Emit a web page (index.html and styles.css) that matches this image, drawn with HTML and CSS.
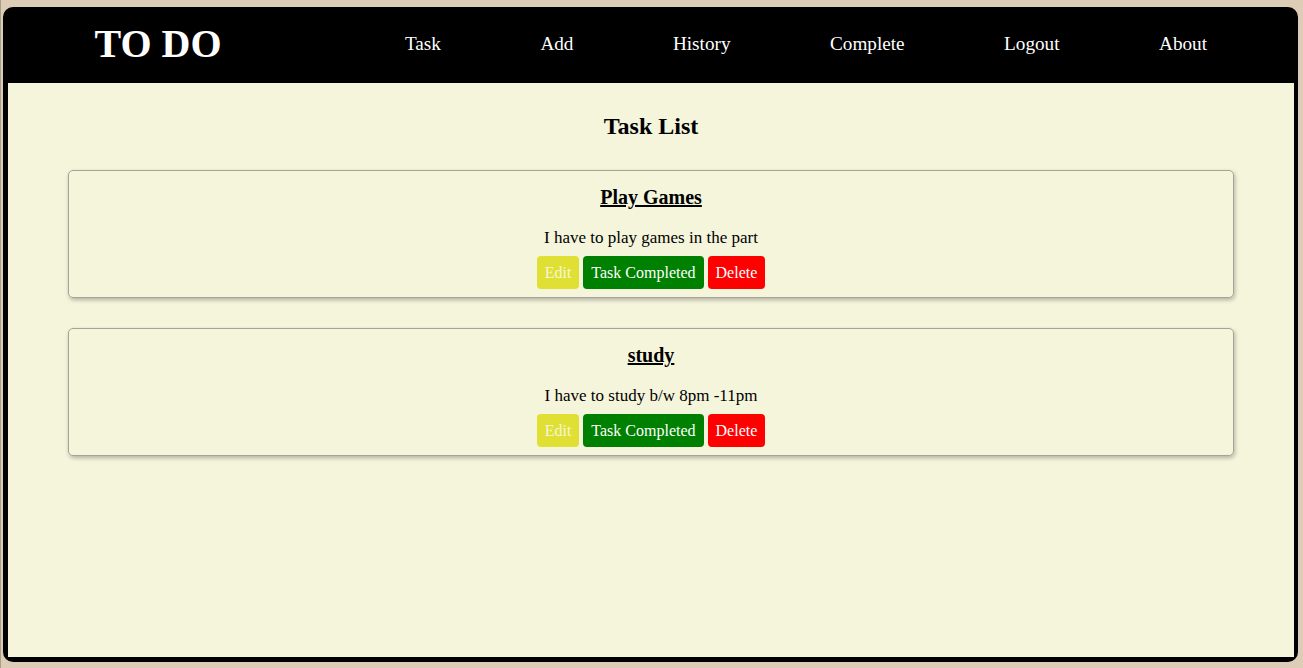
FILE: index.html
```html
<!DOCTYPE html>
<html lang="en">
<head>
<meta charset="utf-8">
<title>TO DO</title>
<link rel="stylesheet" href="styles.css">
</head>
<body>
<div class="frame">
  <header class="topbar">
    <div class="logo">TO DO</div>
    <nav class="nav">
      <a class="nav-link" href="#">Task</a>
      <a class="nav-link" href="#">Add</a>
      <a class="nav-link" href="#">History</a>
      <a class="nav-link" href="#">Complete</a>
      <a class="nav-link" href="#">Logout</a>
      <a class="nav-link" href="#">About</a>
    </nav>
  </header>
  <main class="content">
    <h2 class="page-title">Task List</h2>
    <div class="card">
      <h3 class="card-title">Play Games</h3>
      <p class="card-desc">I have to play games in the part</p>
      <div class="actions">
        <button class="btn btn-edit">Edit</button>
        <button class="btn btn-done">Task Completed</button>
        <button class="btn btn-delete">Delete</button>
      </div>
    </div>
    <div class="card">
      <h3 class="card-title">study</h3>
      <p class="card-desc">I have to study b/w 8pm -11pm</p>
      <div class="actions">
        <button class="btn btn-edit">Edit</button>
        <button class="btn btn-done">Task Completed</button>
        <button class="btn btn-delete">Delete</button>
      </div>
    </div>
  </main>
</div>
</body>
</html>
```

FILE: styles.css
```css
html, body {
  margin: 0;
  padding: 0;
  height: 100%;
}
body {
  background: #ddccb6;
  font-family: "Liberation Serif", "Times New Roman", serif;
  box-sizing: border-box;
  padding: 7px 5px 6px 3px;
  border-left: 1px solid #a89c8e;
}
.frame {
  box-sizing: border-box;
  height: 100%;
  margin-left: -1px;
  background: #000;
  border-radius: 10px;
  padding: 0 4px 5px 5px;
  display: flex;
  flex-direction: column;
}
.topbar {
  box-sizing: border-box;
  height: 76px;
  padding-bottom: 2px;
  display: flex;
  align-items: center;
  flex-shrink: 0;
}
.logo {
  width: 300px;
  text-align: center;
  color: #fff;
  font-weight: bold;
  font-size: 40px;
  line-height: 46px;
}
.nav {
  margin-left: auto;
  margin-right: 87px;
  display: flex;
  gap: 99.5px;
}
.nav-link {
  color: #fff;
  text-decoration: none;
  font-size: 19.2px;
}
.content {
  flex: 1;
  background: #f5f5dc;
  padding: 29px 60px 0;
}
.page-title {
  margin: 0 0 30px;
  text-align: center;
  font-size: 24px;
  line-height: 28px;
  font-weight: bold;
  color: #000;
}
.card {
  border: 1px solid #a5a39a;
  border-radius: 5px;
  box-shadow: 1px 2px 4px rgba(0, 0, 0, 0.28);
  padding: 15px 0 8px;
  margin-bottom: 30px;
  text-align: center;
}
.card-title {
  margin: 0;
  font-size: 20px;
  line-height: 23px;
  font-weight: bold;
  text-decoration: underline;
}
.card-desc {
  margin: 19px 0 9px;
  font-size: 17px;
  line-height: 19px;
}
.actions {
  display: flex;
  justify-content: center;
  gap: 4px;
}
.btn {
  font-family: "Liberation Serif", "Times New Roman", serif;
  font-size: 16px;
  line-height: 19px;
  padding: 7px 8px;
  border: none;
  border-radius: 4px;
  color: #fff;
  cursor: pointer;
}
.btn-edit {
  background: #e0e034;
  color: #f6f6d8;
}
.btn-done {
  background: #008000;
}
.btn-delete {
  background: #ff0000;
}
```
